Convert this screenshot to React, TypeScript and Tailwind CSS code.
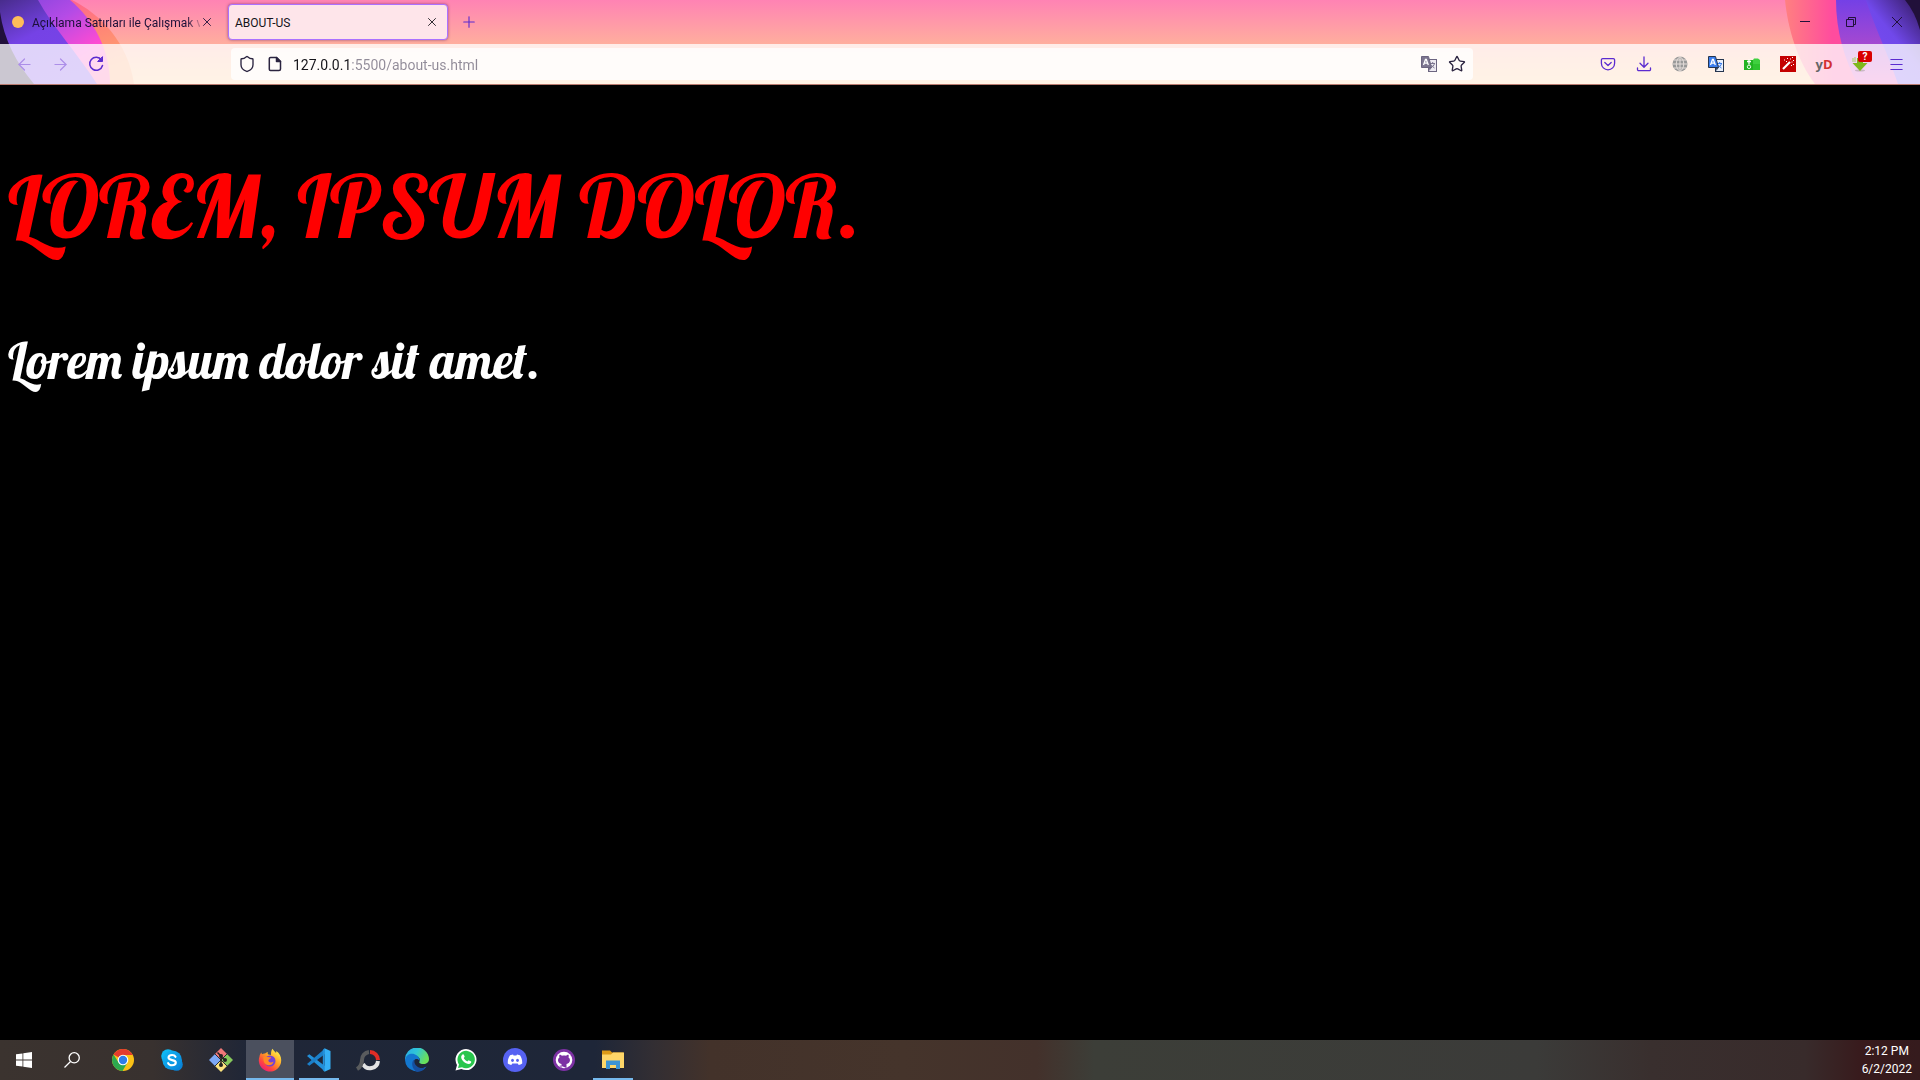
import React from "react";
import { X, Plus, Menu, Star, Shield, ArrowLeft, ArrowRight } from "lucide-react";

function ThemeLeft() {
  return (
    <svg className="absolute left-0 top-0 h-[84px] w-[140px]" viewBox="0 0 140 84" aria-hidden="true">
      <defs>
        <linearGradient id="lp" x1="0" y1="0" x2="0.6" y2="1">
          <stop offset="0" stopColor="#482c8c" />
          <stop offset="0.45" stopColor="#7542e5" />
          <stop offset="1" stopColor="#7a45ea" />
        </linearGradient>
        <linearGradient id="lv" x1="0" y1="0" x2="0.8" y2="1">
          <stop offset="0" stopColor="#7c43dc" />
          <stop offset="0.4" stopColor="#b44be6" />
          <stop offset="0.75" stopColor="#ff4bd2" />
          <stop offset="1" stopColor="#ff62a8" />
        </linearGradient>
        <linearGradient id="lo" x1="0" y1="0" x2="0.5" y2="1">
          <stop offset="0" stopColor="#ff4da0" />
          <stop offset="0.5" stopColor="#ff8078" />
          <stop offset="1" stopColor="#ffa66c" />
        </linearGradient>
      </defs>
      <path d="M0 0H72C100 14 128 42 134 84H0Z" fill="url(#lo)" />
      <path d="M0 0H70C94 20 110 50 110 84H0Z" fill="url(#lv)" />
      <path d="M0 0H38C52 26 78 54 97 84H0Z" fill="url(#lp)" />
      <path d="M0 12C4 40 16 62 34 84H0Z" fill="#21103a" />
    </svg>
  );
}

function ThemeRight() {
  return (
    <svg className="absolute right-0 top-0 h-[84px] w-[140px]" viewBox="0 0 140 84" aria-hidden="true">
      <defs>
        <linearGradient id="ro" x1="0" y1="0" x2="1" y2="0">
          <stop offset="0" stopColor="#ff8080" />
          <stop offset="0.35" stopColor="#ff4c9e" />
          <stop offset="1" stopColor="#ff4ca4" />
        </linearGradient>
        <linearGradient id="rp" x1="0" y1="0" x2="0" y2="1">
          <stop offset="0" stopColor="#7440e6" />
          <stop offset="0.5" stopColor="#a248d2" />
          <stop offset="1" stopColor="#e84fc0" />
        </linearGradient>
        <linearGradient id="rv" x1="1" y1="0" x2="0.2" y2="1">
          <stop offset="0" stopColor="#33195e" />
          <stop offset="0.5" stopColor="#7048ea" />
          <stop offset="1" stopColor="#7a4cf5" />
        </linearGradient>
      </defs>
      <path d="M5 0C8 30 18 62 35 84H140V0Z" fill="url(#ro)" />
      <path d="M56 0C56 30 64 60 78 84H140V0Z" fill="url(#rp)" />
      <path d="M86 0C95 28 108 54 118 84H140V0Z" fill="url(#rv)" />
      <path d="M125 0Q135 12 140 30V0Z" fill="#21103a" />
    </svg>
  );
}

function Translate({ a, b, line }: { a: string; b: string; line: string }) {
  return (
    <svg viewBox="0 0 16 16" className="size-4" aria-hidden="true">
      <rect x="7.500" y="3.500" width="8" height="12" fill={b} stroke={line} />
      <path d="M9.500 7.500h4.500M11.700 6v1.500M13.500 7.500c-.5 2-2 3.500-3.500 4.500M10.500 9c.7 1.500 2 2.500 3 3" stroke={a} fill="none" />
      <path d="M.5.5h7l3 11h-10Z" fill={a} stroke={line} />
      <path d="M8 11.500l2.500 0L8.500 15Z" fill={line} />
      <path d="M2.500 9 4.500 3.500h.8L7.300 9M3.300 7.200h3.200" stroke="#fff" strokeWidth="1.300" fill="none" />
    </svg>
  );
}

const toolIcons: { name: string; icon: React.ReactNode }[] = [
  {
    name: "Save to Pocket",
    icon: (
      <svg viewBox="0 0 16 16" className="size-4" fill="none" stroke="#5b2bd0" strokeWidth="1.300" strokeLinecap="round" strokeLinejoin="round">
        <path d="M2.700 2.600h10.600a1.300 1.300 0 0 1 1.300 1.300v3.300a6.600 6.600 0 0 1-13.200 0V3.900a1.300 1.300 0 0 1 1.300-1.300ZM4.800 6.500 8 9.500l3.200-3" />
      </svg>
    ),
  },
  {
    name: "Downloads",
    icon: (
      <svg viewBox="0 0 16 16" className="size-4" fill="none" stroke="#5b2bd0" strokeWidth="1.300" strokeLinecap="round" strokeLinejoin="round">
        <path d="M8 1v10M4 7.300l4 4 4-4M1.500 12v1.500a1.200 1.200 0 0 0 1.200 1.200h10.600a1.200 1.200 0 0 0 1.200-1.200V12" />
      </svg>
    ),
  },
  {
    name: "Web proxy",
    icon: (
      <svg viewBox="0 0 16 16" className="size-4" fill="none">
        <circle cx="8" cy="8" r="7.500" fill="#999" />
        <path d="M8 .5v15M.5 8h15M2 4h12M2 12h12M8 .5C3 4 3 12 8 15.500M8 .5c5 3.500 5 11.500 0 15" stroke="#e6dedb" />
      </svg>
    ),
  },
  { name: "Translate page", icon: <Translate a="#3b7ded" b="#eaf0fb" line="#25354f" /> },
  {
    name: "Folder",
    icon: (
      <svg viewBox="0 0 16 16" className="size-4">
        <path d="M0 4h9l1-1.500h4L16 4v10H0Z" fill="#3fd03f" />
        <path d="M0 4h9v10H0Z" fill="#22b322" />
        <path d="M9 8h7v6H9Z" fill="#2ec42e" />
        <path d="M5 3.500v5M3 5.500h4" stroke="#fff" strokeWidth="1.300" />
        <circle cx="5" cy="10.800" r="1.700" fill="none" stroke="#e6ffe6" />
      </svg>
    ),
  },
  {
    name: "Magic wand",
    icon: (
      <svg viewBox="0 0 16 16" className="size-4">
        <path d="M0 0h16v16H0Z" fill="#c40000" />
        <path d="m3 13 7-7" stroke="#fff" strokeWidth="2.200" />
        <path d="M4 4h1M7 2.500h1M6 5.500h1M10 3h1M12 1.500h1M13 4.500h1M11.500 6h1M13 8.500h1M11 9.500h1" stroke="#fff" />
      </svg>
    ),
  },
  {
    name: "yD",
    icon: (
      <span className="font-['Open_Sans',sans-serif] text-[13px] font-bold leading-4 text-[#666]">
        y<span className="text-[#d22f32]">D</span>
      </span>
    ),
  },
  {
    name: "Download helper",
    icon: (
      <span className="relative block size-4">
        <svg viewBox="0 0 16 16" className="size-4">
          <ellipse cx="8" cy="14.500" rx="5" ry="1" fill="#c9b8c4" />
          <path d="M5 2h6v5h4.500L8 15 .5 7H5Z" fill="#7fb81e" />
          <path d="M1 2v4M3 1v5" stroke="#a5cf60" />
        </svg>
        <span className="absolute -top-[5px] left-[6px] h-[11px] w-[14px] rounded-[2px] bg-[#d90000] text-center text-[10px] font-bold leading-[11px] text-white">?</span>
      </span>
    ),
  },
  { name: "Open application menu", icon: <Menu className="size-[17px] text-[#5b2bd0]" strokeWidth={1.500} /> },
];

function Chrome() {
  return (
    <svg viewBox="0 0 24 24" className="size-6">
      <circle cx="12" cy="12" r="11" fill="#fbc116" />
      <path d="M12 12 2.500 6.500A11 11 0 0 1 21.500 6.500L21.800 7H12Z" fill="#e33b2e" />
      <path d="M2.500 6.500A11 11 0 0 0 11.500 23l5-8.500L12 12 7.600 14.500Z" fill="#2da94f" />
      <circle cx="12" cy="12" r="5.300" fill="#fff" />
      <circle cx="12" cy="12" r="4.200" fill="#2f7de9" />
    </svg>
  );
}
function Skype() {
  return (
    <svg viewBox="0 0 24 24" className="size-6">
      <defs>
        <linearGradient id="sk" x1="0" y1="0" x2="1" y2="1">
          <stop offset="0" stopColor="#10b9f5" />
          <stop offset="1" stopColor="#0882d8" />
        </linearGradient>
      </defs>
      <circle cx="8" cy="8" r="6.800" fill="#0fb8f2" />
      <circle cx="16.500" cy="16.500" r="6.300" fill="#0a84d8" />
      <circle cx="12.200" cy="12.200" r="9.800" fill="url(#sk)" />
      <path d="M15.500 8.800C14.800 7.400 13.500 7 12 7c-2 0-3.500 1-3.500 2.600 0 3.500 7.300 1.500 7.300 5 0 1.700-1.600 2.700-3.800 2.700-1.800 0-3.200-.7-3.900-2.200" fill="none" stroke="#fff" strokeWidth="2.100" strokeLinecap="round" />
    </svg>
  );
}
function Git() {
  return (
    <svg viewBox="0 0 24 24" className="size-6">
      <path d="m12 0 6 6-6 6-6-6Z" fill="#f07878" />
      <path d="m6 6 6 6-6 6-6-6Z" fill="#7da8f5" />
      <path d="m18 6 6 6-6 6-6-6Z" fill="#86c95c" />
      <path d="m12 12 6 6-6 6-6-6Z" fill="#fbe37e" />
      <path d="m5.500 5.500 13 13M18.500 5.500l-13 13" stroke="#2b2b33" />
      <path d="M12 7v11M8.500 4.500 12 8M12 9l4 3" stroke="#222" strokeWidth="1.500" fill="none" />
      <circle cx="12" cy="8" r="2" fill="#222" />
      <circle cx="16" cy="12" r="2" fill="#222" />
      <circle cx="12" cy="17" r="2" fill="#222" />
    </svg>
  );
}
function Firefox() {
  return (
    <svg viewBox="0 0 24 24" className="size-6">
      <defs>
        <linearGradient id="ff" x1="0.85" y1="0.1" x2="0.15" y2="1">
          <stop offset="0" stopColor="#fff04a" />
          <stop offset="0.4" stopColor="#ff9a24" />
          <stop offset="0.7" stopColor="#ff4440" />
          <stop offset="1" stopColor="#e31587" />
        </linearGradient>
      </defs>
      <path d="M14.500.8c1.500 2.200 2.500 3 3.500 4.200.4-.8.3-1.500.2-2C21.500 5 23.200 8.500 23.200 12A11.200 11.200 0 1 1 1.500 8.500C1.700 6.800 2.500 5.300 3.500 4.500c0 .9.200 1.300.5 1.700C5.300 5.300 6.500 5.300 7 5.500 8 4.500 9 4 10 4 9.500 5 9.500 6 10.500 6.500L13 7c0-2.500.2-4.500 1.500-6.200Z" fill="url(#ff)" />
      <circle cx="12" cy="13" r="5.500" fill="#7441d5" />
      <path d="M5.500 9c2-.8 3-.5 4.500 0 1.200.3 2 .1 3.200.3-.2 1.700-2.400 1.600-2.800 2.900-.4 1.600 2.400 3.500 5.200 1.200-1 4.500-7.300 5.200-9.300 1.400C5.500 13 5.200 10.500 5.500 9Z" fill="#ff8a25" />
    </svg>
  );
}
function VsCode() {
  return (
    <svg viewBox="0 0 24 24" className="size-6">
      <path d="m0 8 2.300-1.700L18 18v5.500Z" fill="#2390d9" />
      <path d="m0 16 2.300 1.700L18 6V.5Z" fill="#1b7fc9" />
      <path d="m17.500.3 6 2.800v17.800l-6 2.800Z" fill="#35b0f5" />
      <path d="M17.500.3v23.400L15.800 22V2Z" fill="#2390d9" />
    </svg>
  );
}
function Ring() {
  return (
    <svg viewBox="0 0 24 24" className="size-6" fill="none" strokeWidth="4">
      <path d="M14 4a8 8 0 0 1 8 8" stroke="#e12d26" />
      <path d="M22 13a8 8 0 0 1-15 3" stroke="#e3e3e3" />
      <path d="M13 4a8 8 0 0 0-7 8c0 4-1.500 7-5 9" stroke="#595b5d" />
    </svg>
  );
}
function Edge() {
  return (
    <svg viewBox="0 0 24 24" className="size-6">
      <defs>
        <linearGradient id="eg" x1="0" y1="0" x2="1" y2="0.4">
          <stop offset="0" stopColor="#29a8e8" />
          <stop offset="0.5" stopColor="#30c6d8" />
          <stop offset="1" stopColor="#69e05a" />
        </linearGradient>
      </defs>
      <path d="M0 12A12 12 0 0 1 24 11c0 3.500-2.500 5-5.500 5s-5-1-4-2.500C17 9 9 5 0 12Z" fill="url(#eg)" />
      <path d="M0 12c1-5.500 6-7 9.500-5.700 3.500 1.200 5.800 4 5 6.700-1-2-3-2.500-4.500-1.500-3 2.500-.5 9 5 9 2.500 0 4.500-.7 6.500-2A12 12 0 0 1 0 12Z" fill="#1377cf" />
      <path d="M8.500 12C6 15 7 21 12 24a12 12 0 0 0 9.500-5.500c-2 1.500-5 2-7.500 1-3-1.200-5-4-4.500-7Z" fill="#164f9f" />
    </svg>
  );
}
function WhatsApp() {
  return (
    <svg viewBox="0 0 24 24" className="size-6">
      <path d="M1.500 22.500 3 17A10.500 10.500 0 1 1 7.300 21Z" fill="#fff" />
      <path d="M4 20l1-3.500A8.700 8.700 0 1 1 8 19.200Z" fill="#28c64c" />
      <path d="M8.500 6.500c.6-.5 1.200-.2 1.500.5l.6 1.500c.2.600-.6 1.100-.9 1.600.8 1.600 2 2.700 3.700 3.300.5-.3 1-1.300 1.600-1l1.800.9c.6.3.6 1 .1 1.700-2.500 3.500-10.500-2.500-9.700-6.500.1-.8.7-1.500 1.300-2Z" fill="#fff" />
    </svg>
  );
}
function Discord() {
  return (
    <svg viewBox="0 0 24 24" className="size-6">
      <circle cx="12" cy="12" r="12" fill="#5662f2" />
      <path d="M7 7.200 10 6.500l.6 1h2.800l.6-1 3 .7c1.700 2.500 2.400 5.200 2.200 8.200-1.200.9-2.300 1.400-3.500 1.700l-1-1.500H9.300l-1 1.500c-1.200-.3-2.300-.8-3.500-1.700C4.600 12.400 5.300 9.700 7 7.200Z" fill="#fff" />
      <ellipse cx="9.500" cy="12.300" rx="1.400" ry="1.600" fill="#5662f2" />
      <ellipse cx="14.500" cy="12.300" rx="1.400" ry="1.600" fill="#5662f2" />
    </svg>
  );
}
function Github() {
  return (
    <svg viewBox="0 0 24 24" className="size-6">
      <circle cx="12" cy="12" r="11" fill="#7d31a4" />
      <circle cx="12" cy="12" r="8.300" fill="#fff" />
      <path d="M9.500 20v-2.300c-1.500.3-2.200-.5-2.700-1.400M9.500 18v-2C5 15 5.500 10.500 7.500 9.500 7 8.200 7.300 7 7.600 6.800c1 0 1.900.6 2.400 1 1.300-.3 2.700-.3 4 0 .5-.4 1.400-1 2.400-1 .3.200.6 1.400.1 2.700 2 1 2.500 5.500-2 6.500V20Z" fill="#7d31a4" />
    </svg>
  );
}
function Explorer() {
  return (
    <svg viewBox="0 0 24 24" className="size-6">
      <path d="M1 2.500h8l2 2h11.500V20H1Z" fill="#dc9a17" />
      <path d="M1 6.500h9l2-2h11V20H1Z" fill="#fed668" />
      <path d="M5 21v-8.500h14V21h-4v-4H9v4Z" fill="#3c94d4" />
    </svg>
  );
}

const apps = [
  { name: "Google Chrome", Icon: Chrome, state: "border-transparent" },
  { name: "Skype", Icon: Skype, state: "border-transparent" },
  { name: "Git", Icon: Git, state: "border-transparent" },
  { name: "Firefox", Icon: Firefox, state: "border-[#76b9ed] bg-[#4b505e]" },
  { name: "Visual Studio Code", Icon: VsCode, state: "running" },
  { name: "Recorder", Icon: Ring, state: "border-transparent" },
  { name: "Microsoft Edge", Icon: Edge, state: "border-transparent" },
  { name: "WhatsApp", Icon: WhatsApp, state: "border-transparent" },
  { name: "Discord", Icon: Discord, state: "border-transparent" },
  { name: "GitHub Desktop", Icon: Github, state: "border-transparent" },
  { name: "File Explorer", Icon: Explorer, state: "running" },
];

const iconButton = "flex h-8 w-9 items-center justify-center";

export default function App() {
  return (
    <div className="flex min-h-screen flex-col bg-black font-['Roboto',sans-serif]">
      <header className="relative bg-[linear-gradient(#ff83b4,#ffae9e_44px,#ffcb90)]">
        <ThemeLeft />
        <ThemeRight />
        <div className="relative flex h-11 items-center">
          <div className="flex h-9 w-[228px] items-center px-3">
            <span className="size-3 shrink-0 rounded-full bg-[#ffbd59]" />
            <button className="ml-2 w-[168px] shrink-0 whitespace-nowrap pt-0.5 text-left text-xs text-[#1c1038] [mask-image:linear-gradient(90deg,#000_154px,transparent_172px)]">
              Açıklama Satırları ile Çalışmak v
            </button>
            <button aria-label="Close tab" className="text-[#1c1038]"><X className="size-[14px]" strokeWidth={1.500} /></button>
          </div>
          <div className="flex h-9 w-[220px] items-center justify-between rounded border border-[#ab71ff] bg-[#fee5ea] pl-[6px] pr-2 shadow-[0_0_3px_rgba(80,20,90,0.6)]">
            <button className="pt-0.5 text-xs text-[#15141a]">ABOUT-US</button>
            <button aria-label="Close tab" className="text-[#15141a]"><X className="size-[14px]" strokeWidth={1.500} /></button>
          </div>
          <button aria-label="Open a new tab" className="ml-3 text-[#5b2bd0]"><Plus className="size-[18px]" strokeWidth={1.500} /></button>
          <div className="ml-auto flex text-[#21103a]">
            <button aria-label="Minimize" className="flex h-11 w-[46px] items-center justify-center"><svg viewBox="0 0 10 10" className="size-[10px]"><path d="M0 4.500h10" stroke="currentColor" /></svg></button>
            <button aria-label="Restore" className="flex h-11 w-[46px] items-center justify-center"><svg viewBox="0 0 10 10" className="size-[10px]" fill="none" stroke="currentColor"><path d="M.5 2.500h7v7h-7ZM2.500 2.500v-2h7v7h-2" /></svg></button>
            <button aria-label="Close" className="flex h-11 w-[46px] items-center justify-center"><svg viewBox="0 0 10 10" className="size-[10px]"><path d="m0 0 10 10M10 0 0 10" stroke="currentColor" /></svg></button>
          </div>
        </div>
        <nav aria-label="Navigation" className="relative flex h-[41px] items-center border-b border-[#b97b70] bg-white/77 px-[6px]">
          <button aria-label="Back" className={iconButton}><ArrowLeft className="size-[19px] text-[#ac8ee8]" strokeWidth={1.500} /></button>
          <button aria-label="Forward" className={iconButton}><ArrowRight className="size-[19px] text-[#ac8ee8]" strokeWidth={1.500} /></button>
          <button aria-label="Reload" className={iconButton}>
            <svg viewBox="0 0 16 16" className="size-4" fill="none" stroke="#5b2bd0" strokeWidth="1.500" strokeLinecap="round">
              <path d="M13.500 4A6.500 6.500 0 1 0 14.500 9.500" />
              <path d="M14.500 1v4.500H10Z" fill="#5b2bd0" strokeLinejoin="round" strokeWidth="1" />
            </svg>
          </button>
          <div className="ml-[117px] mr-[117px] flex h-8 flex-1 items-center rounded bg-white/80 pl-[7px] pr-0.5 text-[#2b2440]">
            <Shield className="size-[18px]" strokeWidth={1.800} />
            <svg viewBox="0 0 16 16" className="ml-[11px] size-4" fill="none" stroke="currentColor" strokeWidth="1.500" strokeLinejoin="round"><path d="M3.500 1.500h6l4 4v7.500a1.500 1.500 0 0 1-1.500 1.500H3.500A1.200 1.200 0 0 1 2.300 13.300V2.700A1.200 1.200 0 0 1 3.500 1.500Z" /><path d="M9.500 1.500v4h4Z" fill="currentColor" /></svg>
            <input
              aria-label="Address"
              defaultValue="127.0.0.1:5500/about-us.html"
              className="ml-[10px] min-w-0 flex-1 bg-[linear-gradient(90deg,#15141a_57px,#918b98_57px)] bg-clip-text pt-0.5 text-sm text-transparent outline-none"
            />
            <button aria-label="Translate" className="flex w-7 justify-center"><Translate a="#7d7690" b="#eeebf2" line="#6c6580" /></button>
            <button aria-label="Bookmark this page" className="flex w-7 justify-center"><Star className="size-[18px]" strokeWidth={1.800} /></button>
          </div>
          <div className="flex">
            {toolIcons.map((t) => (
              <button key={t.name} aria-label={t.name} className={iconButton}>{t.icon}</button>
            ))}
          </div>
        </nav>
      </header>

      <main className="flex-1 px-2 font-['Lobster','Liberation_Serif',serif] font-normal">
        <h1 className="mt-[71px] whitespace-nowrap text-[87px] leading-[100px] text-[#ff0000]">LOREM, IPSUM DOLOR.</h1>
        <h2 className="mt-[75px] whitespace-nowrap text-[50px] leading-[60px] text-white">Lorem ipsum dolor sit amet.</h2>
      </main>

      <footer className="flex h-10 items-stretch bg-[linear-gradient(90deg,#3b332f_0%,#38312f_8%,#1f2637_13%,#1e2638_31%,#322e33_34%,#43322a_37%,#45342b_47%,#43312b_54%,#3c3e38_57%,#3b3b39_80%,#392f2e_86%,#382b2b_94%,#381a1c_97%,#351b1d_100%)]">
        <button aria-label="Start" className="flex w-12 items-center justify-center">
          <svg viewBox="0 0 16 16" className="size-4" fill="#fff"><path d="m0 2.300 6.500-.9v6.200H0ZM7.300 1.300 16 0v7.600H7.300ZM0 8.400h6.500v6.200L0 13.700ZM7.300 8.400H16V16l-8.700-1.300Z" /></svg>
        </button>
        <button aria-label="Search" className="flex w-12 items-center justify-center">
          <svg viewBox="0 0 16 16" className="size-4" fill="none" stroke="#fff" strokeWidth="1.300"><circle cx="10.200" cy="5.800" r="5.100" /><path d="M6.500 9.500.5 15.500" /></svg>
        </button>
        <div className="ml-[3px] flex gap-px">
          {apps.map(({ name, Icon, state }) =>
            state === "running" ? (
              <button key={name} aria-label={name} className="flex w-12 justify-center">
                <span className="flex h-10 w-10 items-center justify-center border-b-2 border-[#76b9ed] pt-0.5"><Icon /></span>
              </button>
            ) : (
              <button key={name} aria-label={name} className={`flex w-12 items-center justify-center border-b-2 pt-0.5 ${state}`}><Icon /></button>
            )
          )}
        </div>
        <div className="ml-auto mr-2 flex flex-col justify-center text-center text-xs leading-[18px] text-white">
          <time>2:12 PM</time>
          <time>6/2/2022</time>
        </div>
      </footer>
    </div>
  );
}
